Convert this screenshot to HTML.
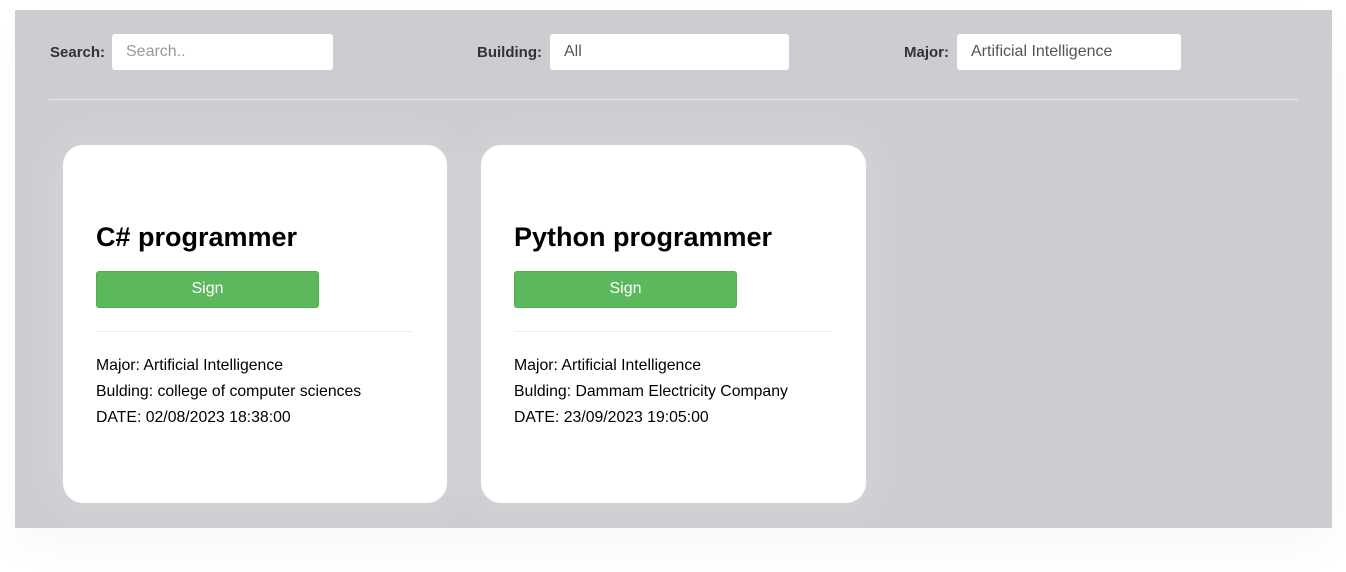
<!DOCTYPE html>
<html><head><style>
body{margin:0;width:1346px;height:572px;background:#fff;font-family:"Liberation Sans",sans-serif;position:relative;overflow:hidden}
.bg{position:absolute;left:15px;top:10px;width:1317px;height:518px;background:#cbcdd1;box-shadow:0 20px 40px rgba(0,0,0,0.03)}
.lbl{position:absolute;top:44px;font-size:15px;font-weight:bold;color:#333}
.inp{position:absolute;top:34px;height:36px;background:#fff;border-radius:3px;font-size:16px;line-height:36px;padding-left:14px;box-sizing:border-box;color:#555}
.hr{position:absolute;left:49px;top:99px;width:1249px;height:1px;background:#e6e7ea}
.card{position:absolute;top:145px;width:384px;height:358px;background:#fff;border-radius:20px;box-shadow:0 0 40px 10px rgba(255,255,255,0.15)}
.card h2{position:absolute;left:33px;top:77px;margin:0;font-size:27px;font-weight:bold;color:#000}
.btn{position:absolute;left:33px;top:126px;width:223px;height:37px;background:#5cb85c;border:1px solid #4cae4c;box-sizing:border-box;border-radius:3px;color:#fff;font-size:16px;text-align:center;line-height:34px}
.dv{position:absolute;left:33px;top:186px;width:317px;height:1px;background:#eee}
.info{position:absolute;left:33px;top:208px;font-size:15.8px;color:#000;line-height:26px}
</style></head><body>
<div class="bg"></div>
<div class="lbl" style="left:50px">Search:</div>
<div class="inp" style="left:112px;width:221px;color:#999">Search..</div>
<div class="lbl" style="left:477px">Building:</div>
<div class="inp" style="left:550px;width:239px">All</div>
<div class="lbl" style="left:904px">Major:</div>
<div class="inp" style="left:957px;width:224px">Artificial Intelligence</div>
<div class="hr"></div>
<div class="card" style="left:63px">
<h2>C# programmer</h2><div class="btn">Sign</div><div class="dv"></div>
<div class="info">Major: Artificial Intelligence<br>Bulding: college of computer sciences<br>DATE: 02/08/2023 18:38:00</div>
</div>
<div class="card" style="left:481px;width:385px">
<h2>Python programmer</h2><div class="btn">Sign</div><div class="dv"></div>
<div class="info">Major: Artificial Intelligence<br>Bulding: Dammam Electricity Company<br>DATE: 23/09/2023 19:05:00</div>
</div>
</body></html>
